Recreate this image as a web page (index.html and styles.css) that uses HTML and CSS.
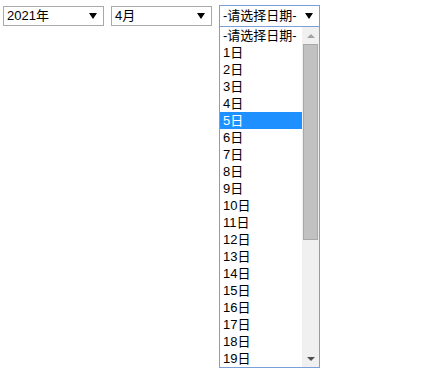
FILE: index.html
```html
<!DOCTYPE html>
<html lang="zh-CN">
<head>
  <meta charset="UTF-8" />
  <title>日期选择</title>
  <link rel="stylesheet" href="styles.css">
</head>
<body>
  <div class="pickers">
    <div class="select"><span>2021年</span><i class="arrow"></i></div>
    <div class="select"><span>4月</span><i class="arrow"></i></div>
    <div class="select-wrap">
      <div class="select open"><span>-请选择日期-</span><i class="arrow"></i></div>
      <div class="dropdown">
        <ul class="options" id="days">
          <li>-请选择日期-</li>
        </ul>
        <div class="scrollbar">
          <div class="btn up"></div>
          <div class="track"><div class="thumb"></div></div>
          <div class="btn down"></div>
        </div>
      </div>
    </div>
  </div>

  <script>
    const days = document.getElementById("days");
    for (let d = 1; d <= 19; d++) {
      const li = document.createElement("li");
      li.textContent = d + "日";
      if (d === 5) li.classList.add("active");
      days.appendChild(li);
    }
  </script>
</body>
</html>
```

FILE: styles.css
```css
html, body {
  margin: 0;
  min-height: 392px;
}
body {
  font-family: "Liberation Sans", Arial, "Noto Sans CJK SC", sans-serif;
  font-size: 13px;
  color: #000;
  background: #fff;
}
.pickers {
  display: flex;
  gap: 7px;
  padding: 6px 3px;
  align-items: flex-start;
}
.select {
  box-sizing: border-box;
  width: 101px;
  height: 20px;
  border: 1px solid #a9a9a9;
  display: flex;
  align-items: center;
  justify-content: space-between;
  padding: 0 6px 0 3px;
  background: #fff;
}
.select span {
  line-height: 18px;
}
.arrow {
  width: 0;
  height: 0;
  border-left: 4px solid transparent;
  border-right: 4px solid transparent;
  border-top: 6px solid #000;
}
.select-wrap {
  margin-top: -1px;
  display: flex;
  flex-direction: column;
}
.select.open {
  border-color: #7a9fd9;
  border-bottom: none;
  height: 21px;
}
.dropdown {
  box-sizing: border-box;
  width: 101px;
  height: 342px;
  border: 1px solid #7a9fd9;
  display: flex;
  background: #fff;
}
.options {
  list-style: none;
  margin: 0;
  padding: 0;
  flex: 1;
  overflow: hidden;
}
.options li {
  height: 17px;
  line-height: 17px;
  padding-left: 3px;
  white-space: nowrap;
}
.options li.active {
  background: #1e90ff;
  color: #fff;
}
.scrollbar {
  width: 17px;
  background: #f0f0f0;
  display: flex;
  flex-direction: column;
}
.btn {
  height: 17px;
  display: flex;
  align-items: center;
  justify-content: center;
}
.btn::after {
  content: "";
  border-left: 4px solid transparent;
  border-right: 4px solid transparent;
}
.btn.up::after {
  border-bottom: 4px solid #a3a3a3;
}
.btn.down::after {
  border-top: 4px solid #505050;
}
.track {
  flex: 1;
  padding: 0 1px;
}
.thumb {
  height: 196px;
  background: #c1c1c1;
  border: 1px solid #a8a8a8;
  box-sizing: border-box;
}
```
